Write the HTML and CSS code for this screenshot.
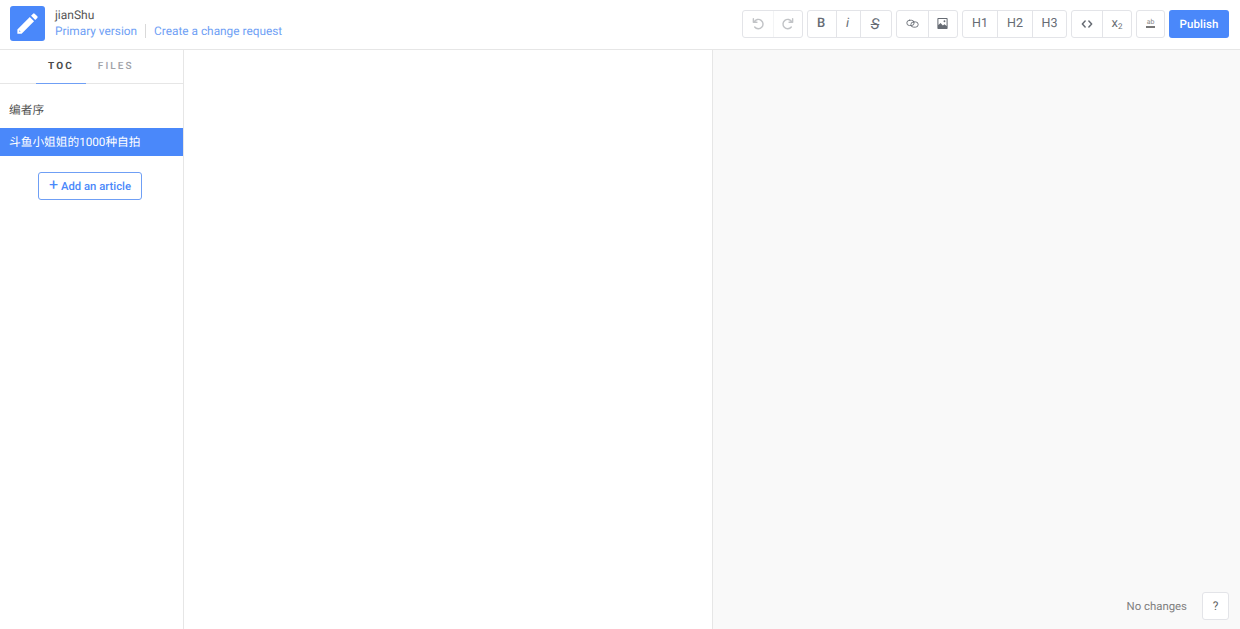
FILE: index.html
```html
<!DOCTYPE html>
<html lang="en">
<head>
<meta charset="utf-8">
<title>jianShu</title>
<link rel="stylesheet" href="styles.css">
</head>
<body>
<header class="topbar">
  <div class="logo">
    <svg viewBox="0 0 24 24" width="27" height="27"><path fill="#fff" d="M3 17.25V21h3.75L17.81 9.94l-3.75-3.75L3 17.25zM5.900 19.300H4.700v-1.200l1.200 1.200zM20.710 7.040a1 1 0 0 0 0-1.410l-2.340-2.340a1 1 0 0 0-1.410 0l-1.830 1.830 3.750 3.750 1.830-1.830z"/></svg>
  </div>
  <div class="book">
    <div class="book-title">jianShu</div>
    <div class="book-links"><a class="link first">Primary version</a><a class="link">Create a change request</a></div>
  </div>
  <div class="toolbar">
    <div class="group">
      <button class="tool w30 faint nudge"><svg viewBox="0 0 16 16" width="15" height="15"><path class="st" d="M4.500 6.200A5 5 0 1 1 5 11.800M3.600 2.800v3.800h3.800"/></svg></button>
      <button class="tool w29 faint"><svg viewBox="0 0 16 16" width="15" height="15"><path class="st" d="M11.500 6.200A5 5 0 1 0 11 11.800M12.400 2.800v3.800H8.600"/></svg></button>
    </div>
    <div class="group">
      <button class="tool w28 bold nudge">B</button>
      <button class="tool w24 ital nudge">i</button>
      <button class="tool w31 strike nudge">S</button>
    </div>
    <div class="group">
      <button class="tool w31"><svg viewBox="0 0 16 16" width="13" height="13"><rect class="st thin" x="1" y="4" width="9" height="6.500" rx="3.250"/><rect class="st thin" x="6" y="6" width="9" height="6.500" rx="3.250"/></svg></button>
      <button class="tool w29 nudge"><svg viewBox="0 0 14 16" width="11" height="13"><path class="pic" fill-rule="evenodd" d="M1.500 1h11a1 1 0 0 1 1 1v12a1 1 0 0 1-1 1h-11a1 1 0 0 1-1-1V2a1 1 0 0 1 1-1zm.3 1.400V10l2.700-2.500 3 3 2-1.500 2.700 2.200V2.400zM9.500 4a1.200 1.200 0 1 1 0 2.400 1.200 1.200 0 0 1 0-2.400z"/></svg></button>
    </div>
    <div class="group">
      <button class="tool w34 head">H1</button>
      <button class="tool w35 head">H2</button>
      <button class="tool w34 head">H3</button>
    </div>
    <div class="group">
      <button class="tool w30"><svg viewBox="0 0 16 16" width="12" height="12"><path class="st heavy" d="M5.500 4 1.800 8l3.700 4M10.500 4l3.700 4-3.700 4"/></svg></button>
      <button class="tool w29 subs">x<sub class="sub">2</sub></button>
    </div>
    <div class="group">
      <button class="tool w27"><span class="rule-glyph">ab</span></button>
    </div>
    <button class="publish">Publish</button>
  </div>
</header>
<main class="workspace">
  <aside class="sidebar">
    <nav class="tabs">
      <a class="tab active">TOC</a>
      <a class="tab">FILES</a>
    </nav>
    <ul class="toc">
      <li class="toc-item">编者序</li>
      <li class="toc-item current">斗鱼小姐姐的1000种自拍</li>
    </ul>
    <div class="add-wrap"><button class="add"><span class="plus">+</span> Add an article</button></div>
  </aside>
  <section class="editor"></section>
  <section class="preview">
    <span class="status">No changes</span>
    <button class="help">?</button>
  </section>
</main>
</body>
</html>
```
FILE: styles.css
```css
* { box-sizing: border-box; }
html, body { height: 100%; }
body {
  margin: 0;
  height: 629px;
  overflow: hidden;
  display: flex;
  flex-direction: column;
  background: #fff;
  font-family: Roboto, "Noto Sans CJK SC", sans-serif;
  color: #4a4a4a;
  text-rendering: geometricPrecision;
  -webkit-font-smoothing: antialiased;
}
button { font-family: inherit; padding: 0; cursor: pointer; text-rendering: geometricPrecision; }

.topbar {
  height: 50px;
  flex: none;
  display: flex;
  align-items: center;
  padding: 0 11px 2px 10px;
  border-bottom: 1px solid #e6e6e6;
}
.logo {
  width: 35px;
  height: 35px;
  flex: none;
  display: flex;
  align-items: center;
  justify-content: center;
  background: #4a88fa;
  border-radius: 3px;
}
.book { margin-left: 10px; margin-bottom: 2px; }
.book-title { font-size: 12px; line-height: 16px; color: #555; }
.book-links { display: flex; align-items: center; font-size: 11.850px; line-height: 16px; }
.link { color: #6f9ff5; }
.link.first { padding-right: 8px; margin-right: 8px; border-right: 1px solid #d9d9d9; line-height: 14px; }

.toolbar { margin-left: auto; display: flex; gap: 4px; align-items: center; }
.group {
  display: flex;
  height: 28px;
  border: 1px solid #e3e4e8;
  border-radius: 3px;
  background: #fff;
}
.tool {
  border: 0;
  border-left: 1px solid #e3e4e8;
  background: transparent;
  color: #666b73;
  font-size: 12px;
  display: flex;
  align-items: center;
  justify-content: center;
}
.tool:first-child { border-left: 0; }
.nudge { padding-right: 2px; }
.w24 { width: 24px; }
.w27 { width: 27px; }
.w28 { width: 28px; }
.w29 { width: 29px; }
.w30 { width: 30px; }
.w31 { width: 31px; }
.w34 { width: 34px; }
.w35 { width: 35px; }
.head { font-size: 12.500px; }
.faint { opacity: .4; }
.bold { font-weight: 500; font-size: 13px; }
.ital { font-style: italic; font-size: 13px; }
.strike { font-style: italic; text-decoration: line-through; font-size: 15px; }
.subs { font-size: 13px; }
.sub { font-size: 8px; line-height: 0; margin-top: 7px; }
.rule-glyph { font-size: 7px; line-height: 6px; border-bottom: 2px solid #777; padding: 0 1px 1px; color: #888; }
.st { fill: none; stroke: #666b73; stroke-width: 1.500; stroke-linecap: round; stroke-linejoin: round; }
.st.thin { stroke-width: 1.100; }
.st.heavy { stroke-width: 2; }
.pic { fill: #666b73; }
.publish {
  width: 60px;
  height: 28px;
  border: 0;
  border-radius: 3px;
  background: #4a88fa;
  color: #fff;
  font-size: 11.500px;
  font-weight: 500;
  letter-spacing: .1px;
}

.workspace { flex: 1; display: flex; min-height: 0; }
.sidebar { width: 184px; flex: none; border-right: 1px solid #e6e6e6; }
.tabs {
  display: flex;
  height: 34px;
  padding-left: 36px;
  border-bottom: 1px solid #e6e6e6;
}
.tab {
  height: 34px;
  padding: 10px 12px 0;
  font-size: 10px;
  line-height: 13px;
  font-weight: 500;
  letter-spacing: 2.100px;
  color: #a0a2a8;
}
.tab.active { color: #4a4a4a; font-weight: 700; border-bottom: 1px solid #6f9ff5; }
.toc { list-style: none; margin: 0; padding: 9px 0 0; }
.toc-item {
  height: 35px;
  padding: 9px 9px 0;
  font-size: 11.700px;
  line-height: 16px;
  color: #4f4f4f;
}
.toc-item.current {
  height: 28px;
  padding-top: 6px;
  background: #4a88fa;
  color: #fff;
}
.add-wrap { display: flex; justify-content: center; padding: 16px 3px 0 0; }
.add {
  width: 104px;
  height: 28px;
  border: 1px solid #6f9ff5;
  border-radius: 3px;
  background: #fff;
  color: #4a88fa;
  font-size: 11.300px;
  font-weight: 500;
}
.plus { font-size: 16px; line-height: 12px; font-weight: 400; }
.editor { width: 529px; flex: none; border-right: 1px solid #e6e6e6; }
.preview {
  flex: 1;
  background: #f9f9f9;
  display: flex;
  align-items: flex-end;
  justify-content: flex-end;
  padding: 0 11px 9px 0;
}
.status { font-size: 11.400px; line-height: 27px; color: #808080; margin-right: 15px; }
.help {
  width: 27px;
  height: 28px;
  border: 1px solid #e3e4e8;
  border-radius: 3px;
  background: #fff;
  color: #666;
  font-size: 12px;
}
```
